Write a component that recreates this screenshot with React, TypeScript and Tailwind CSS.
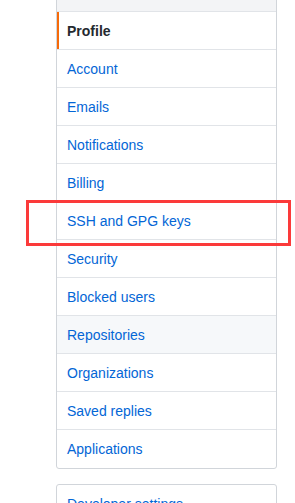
const items = [
  "Account",
  "Emails",
  "Notifications",
  "Billing",
  "SSH and GPG keys",
  "Security",
  "Blocked users",
  "Repositories",
  "Organizations",
  "Saved replies",
  "Applications",
]

export default function App() {
  return (
    <div className="w-[295px] h-[503px] overflow-hidden bg-white font-['Segoe_UI','Liberation_Sans',sans-serif] text-sm leading-[21px]">
      <div className="ml-[56px] w-[221px] -mt-[30px]">
        {/* settings menu */}
        <nav className="relative border border-[#d1d5da] rounded-b-[3px] bg-white">
          <div className="h-[41px] px-[10px] pt-[10px] bg-[#f3f4f6] border-b border-[#e1e4e8] font-semibold text-[#586069]">
            Personal settings
          </div>
          <div className="relative h-[38px] px-[10px] pt-[9px] pb-[7px] border-b border-[#e1e4e8] font-semibold text-[#24292e]">
            <span className="absolute left-0 top-0 bottom-0 w-[2px] bg-[#f66a0a]" />
            Profile
          </div>
          {items.map((name, i) => (
            <div
              key={name}
              className={
                "relative h-[38px] px-[10px] pt-[9px] pb-[7px] text-[#0366d6] " +
                (i < items.length - 1 ? "border-b border-[#e1e4e8] " : "") +
                (name === "Repositories" ? "bg-[#f6f8fa]" : "")
              }
            >
              {name}
              {name === "SSH and GPG keys" && (
                <span className="absolute -left-[31px] -top-[2px] w-[265px] h-[46px] border-[3px] border-[#fb3a3a] pointer-events-none" />
              )}
            </div>
          ))}
        </nav>

        <div className="mt-[15px] border border-[#d1d5da] rounded-[3px] bg-white">
          <div className="px-[10px] pt-[9px] pb-[7px] text-[#0366d6]">Developer settings</div>
        </div>
      </div>
    </div>
  )
}
